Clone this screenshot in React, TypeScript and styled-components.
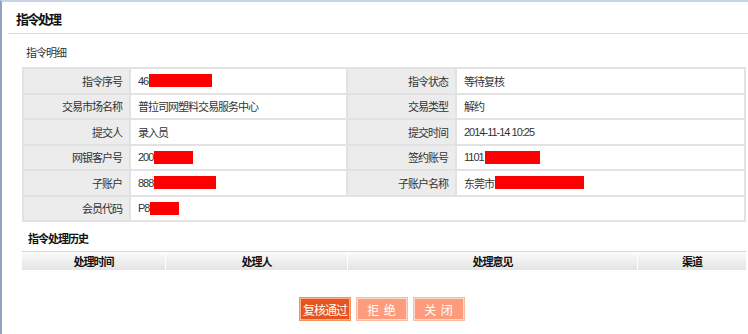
import React from 'react';
import styled, { createGlobalStyle } from 'styled-components';

const GlobalStyle = createGlobalStyle`
  * {
    box-sizing: border-box;
  }

  body {
    margin: 0;
    background: #fff;
    font-family: "Liberation Sans", "Noto Sans CJK SC", sans-serif;
    color: #333;
  }
`;

const Page = styled.div`
  min-height: 100vh;
  border-left: 2px solid #8fa2be;
  border-top: 2px solid #c8d5e6;
  background: #fff;
`;

const TitleBar = styled.div`
  display: flex;
  align-items: center;
  height: 32px;
  margin-left: 6px;
  padding: 2px 0 0 8px;
  border-bottom: 1px solid #dadada;
  font-size: 13px;
  font-weight: bold;
  letter-spacing: -2px;
  color: #111;
`;

const Content = styled.div`
  padding: 0 2px 0 20px;
`;

const SectionLabel = styled.div<{ $bold?: boolean; $height: number; $indent: number }>`
  display: flex;
  align-items: center;
  height: ${(p) => p.$height}px;
  padding: 2px 0 0 ${(p) => p.$indent}px;
  font-size: 11px;
  letter-spacing: -1px;
  font-weight: ${(p) => (p.$bold ? 'bold' : 'normal')};
  color: ${(p) => (p.$bold ? '#111' : '#333')};
`;

const DetailGrid = styled.div`
  display: grid;
  grid-template-columns: 107px 217px 109px 1fr;
  grid-auto-rows: 25.5px;
  border-top: 2px solid #e2e2e2;
  border-left: 2px solid #e2e2e2;
`;

const Cell = styled.div<{ $label?: boolean; $span?: number }>`
  display: flex;
  align-items: center;
  justify-content: ${(p) => (p.$label ? 'flex-end' : 'flex-start')};
  padding: ${(p) => (p.$label ? '0 7px 0 0' : '0 0 0 7px')};
  grid-column: span ${(p) => p.$span || 1};
  background: ${(p) => (p.$label ? '#ececec' : '#fff')};
  border-right: 2px solid #e2e2e2;
  border-bottom: 2px solid #e2e2e2;
  font-size: 11px;
  letter-spacing: -1px;
  white-space: nowrap;
  color: #333;
`;

// red blocks hide the account numbers in the original screenshot
const Redacted = styled.span<{ $w: number }>`
  display: inline-block;
  width: ${(p) => p.$w}px;
  height: 13px;
  margin-left: 1px;
  background: #ff0000;
`;

const HistoryHeader = styled.div`
  display: grid;
  grid-template-columns: 144px 182px 290px 1fr;
  height: 19px;
  border-top: 1px solid #d9d9d9;
  background: linear-gradient(#fbfbfb, #e4e4e4);
`;

const HeaderCell = styled.div`
  display: flex;
  align-items: center;
  justify-content: center;
  border-right: 1px solid #fff;
  font-size: 11px;
  font-weight: bold;
  letter-spacing: -1px;
  color: #111;

  &:last-child {
    border-right: none;
  }
`;

const ButtonRow = styled.div`
  display: flex;
  justify-content: center;
  gap: 5px;
  margin-top: 27px;
  padding-left: 14px;
`;

const ActionButton = styled.button<{ $primary?: boolean }>`
  width: 52px;
  height: 24px;
  padding: 0;
  border: 1px solid ${(p) => (p.$primary ? '#f3935c' : '#fdb89e')};
  box-shadow: inset 0 0 0 1px ${(p) => (p.$primary ? '#f7b088' : '#fdd9ca')};
  background: ${(p) => (p.$primary ? '#e8541f' : '#fd9c7c')};
  color: #fff;
  font-family: "Noto Sans CJK SC", sans-serif;
  font-size: 12px;
  letter-spacing: ${(p) => (p.$primary ? '-1px' : '1px')};
  white-space: pre;
  cursor: pointer;
`;

type Row = [string, React.ReactNode, string?, React.ReactNode?];

const rows: Row[] = [
  ['指令序号', <>46<Redacted $w={63} /></>, '指令状态', '等待复核'],
  ['交易市场名称', '普拉司网塑料交易服务中心', '交易类型', '解约'],
  ['提交人', '录入员', '提交时间', '2014-11-14 10:25'],
  ['网银客户号', <>200<Redacted $w={39} /></>, '签约账号', <>1101<Redacted $w={55} /></>],
  ['子账户', <>888<Redacted $w={62} /></>, '子账户名称', <>东莞市<Redacted $w={89} /></>],
  ['会员代码', <>P8<Redacted $w={29} /></>]
];

const historyColumns = ['处理时间', '处理人', '处理意见', '渠道'];

const App = (): JSX.Element => (
  <Page>
    <GlobalStyle />
    <TitleBar>指令处理</TitleBar>
    <Content>
      <SectionLabel $height={33} $indent={4}>指令明细</SectionLabel>
      <DetailGrid>
        {rows.map((row, i) => (
          <React.Fragment key={i}>
            <Cell $label>{row[0]}</Cell>
            <Cell $span={row[2] ? 1 : 3}>{row[1]}</Cell>
            {row[2] && (
              <>
                <Cell $label>{row[2]}</Cell>
                <Cell>{row[3]}</Cell>
              </>
            )}
          </React.Fragment>
        ))}
      </DetailGrid>
      <SectionLabel $bold $height={29} $indent={6}>指令处理历史</SectionLabel>
      <HistoryHeader>
        {historyColumns.map((col) => (
          <HeaderCell key={col}>{col}</HeaderCell>
        ))}
      </HistoryHeader>
    </Content>
    <ButtonRow>
      <ActionButton $primary>复核通过</ActionButton>
      <ActionButton>{'拒 绝'}</ActionButton>
      <ActionButton>{'关 闭'}</ActionButton>
    </ButtonRow>
  </Page>
);

export default App;
